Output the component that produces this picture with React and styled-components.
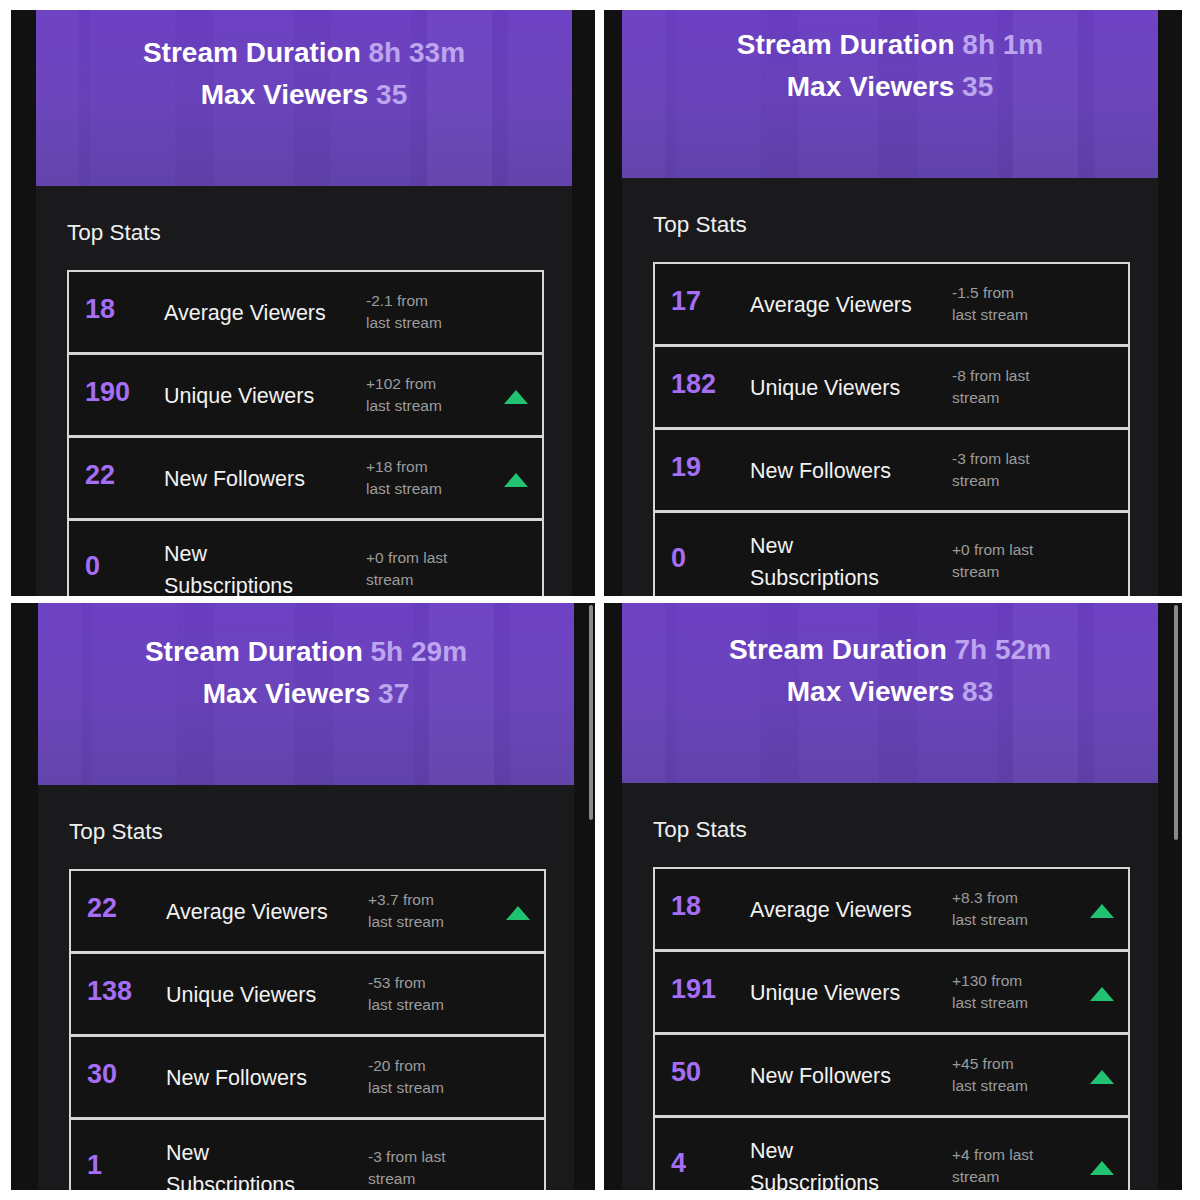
import React from 'react';
import styled, { createGlobalStyle } from 'styled-components';

const GlobalStyle = createGlobalStyle`
  body {
    margin: 0;
    background: #ffffff;
    font-family: "Liberation Sans", Arial, sans-serif;
  }
`;

const Collage = styled.div`
  display: grid;
  grid-template-columns: 584px 578px;
  grid-template-rows: 586px 587px;
  column-gap: 9px;
  row-gap: 7px;
  padding: 10px 0 0 11px;
`;

const Phone = styled.div`
  position: relative;
  overflow: hidden;
  background: #111112;
  padding-left: ${(props) => props.inset}px;
`;

const Column = styled.div`
  width: 536px;
  height: 100%;
  background: #1a1a1c;
`;

// faint vertical light streaks over the purple header
const Banner = styled.div`
  padding: ${(props) => props.top}px 0 70px;
  text-align: center;
  color: #ffffff;
  font-size: 28px;
  font-weight: 700;
  line-height: 42px;
  background:
    linear-gradient(
      90deg,
      rgba(255, 255, 255, 0.025) 0%,
      rgba(255, 255, 255, 0.025) 8%,
      rgba(0, 0, 0, 0.02) 8%,
      rgba(0, 0, 0, 0.02) 10%,
      rgba(255, 255, 255, 0.01) 10%,
      rgba(255, 255, 255, 0.01) 26%,
      rgba(0, 0, 0, 0.015) 26%,
      rgba(0, 0, 0, 0.015) 33%,
      rgba(255, 255, 255, 0.015) 33%,
      rgba(255, 255, 255, 0.015) 48%,
      rgba(0, 0, 0, 0.02) 48%,
      rgba(0, 0, 0, 0.02) 55%,
      rgba(255, 255, 255, 0.01) 55%,
      rgba(255, 255, 255, 0.01) 70%,
      rgba(0, 0, 0, 0.025) 70%,
      rgba(0, 0, 0, 0.025) 73%,
      rgba(255, 255, 255, 0.035) 73%,
      rgba(255, 255, 255, 0.035) 85%,
      rgba(0, 0, 0, 0.025) 85%,
      rgba(0, 0, 0, 0.025) 88%,
      rgba(255, 255, 255, 0.02) 88%
    ),
    linear-gradient(180deg, #6b3ec3 0%, #6942bb 50%, #5f40a9 100%);
`;

const BannerValue = styled.span`
  color: #bca5ee;
`;

const Body = styled.div`
  padding: 34px 0 0 31px;
`;

const SectionTitle = styled.div`
  color: #efefef;
  font-size: 22.5px;
  line-height: 26px;
  margin-bottom: 24px;
`;

const Table = styled.div`
  width: 477px;
  box-sizing: border-box;
  border: 2px solid #d6d6d6;
  border-bottom: none;
  background: #131314;
`;

const Row = styled.div`
  display: flex;
  align-items: center;
  padding: 15px 14px 15px 16px;
  border-top: ${(props) => (props.first ? 'none' : '3px solid #d6d6d6')};
`;

const Count = styled.div`
  width: 79px;
  flex-shrink: 0;
  margin-bottom: 5px;
  color: #a56ef5;
  font-size: 27px;
  font-weight: 700;
  line-height: 1;
`;

const Label = styled.div`
  width: 172px;
  margin-right: 30px;
  padding-top: 2px;
  flex-shrink: 0;
  color: #f2f2f2;
  font-size: 21.5px;
  line-height: 32px;
`;

const Delta = styled.div`
  width: 84px;
  min-height: 50px;
  display: flex;
  align-items: center;
  color: #9c9c9c;
  font-size: 15.5px;
  line-height: 22px;
`;

const Arrow = styled.svg`
  margin-left: auto;
  margin-top: 4px;
  display: block;
`;

const ScrollBar = styled.div`
  position: absolute;
  top: 2px;
  right: ${(props) => props.right}px;
  width: 4px;
  height: ${(props) => props.length}px;
  border-radius: 2px;
  background: #8a8a8a;
`;

const panels = [
  {
    inset: 25,
    top: 22,
    duration: '8h 33m',
    max: 35,
    rows: [
      [18, 'Average Viewers', '-2.1 from last stream', false],
      [190, 'Unique Viewers', '+102 from last stream', true],
      [22, 'New Followers', '+18 from last stream', true],
      [0, 'New Subscriptions', '+0 from last stream', false],
    ],
  },
  {
    inset: 18,
    top: 14,
    duration: '8h 1m',
    max: 35,
    rows: [
      [17, 'Average Viewers', '-1.5 from last stream', false],
      [182, 'Unique Viewers', '-8 from last stream', false],
      [19, 'New Followers', '-3 from last stream', false],
      [0, 'New Subscriptions', '+0 from last stream', false],
    ],
  },
  {
    inset: 27,
    top: 28,
    duration: '5h 29m',
    max: 37,
    scroll: { right: 2, length: 215 },
    rows: [
      [22, 'Average Viewers', '+3.7 from last stream', true],
      [138, 'Unique Viewers', '-53 from last stream', false],
      [30, 'New Followers', '-20 from last stream', false],
      [1, 'New Subscriptions', '-3 from last stream', false],
    ],
  },
  {
    inset: 18,
    top: 26,
    duration: '7h 52m',
    max: 83,
    scroll: { right: 4, length: 235 },
    rows: [
      [18, 'Average Viewers', '+8.3 from last stream', true],
      [191, 'Unique Viewers', '+130 from last stream', true],
      [50, 'New Followers', '+45 from last stream', true],
      [4, 'New Subscriptions', '+4 from last stream', true],
    ],
  },
];

const UpArrow = () => (
  <Arrow width="24" height="14" viewBox="0 0 24 14">
    <polygon points="12,0 24,14 0,14" fill="#21c271" />
  </Arrow>
);

const StatsPanel = ({ panel }) => (
  <Phone inset={panel.inset}>
    <Column>
      <Banner top={panel.top}>
        <div>
          Stream Duration <BannerValue>{panel.duration}</BannerValue>
        </div>
        <div>
          Max Viewers <BannerValue>{panel.max}</BannerValue>
        </div>
      </Banner>
      <Body>
        <SectionTitle>Top Stats</SectionTitle>
        <Table>
          {panel.rows.map(([count, label, delta, up], i) => (
            <Row key={label} first={i === 0}>
              <Count>{count}</Count>
              <Label>{label}</Label>
              <Delta>{delta}</Delta>
              {up && <UpArrow />}
            </Row>
          ))}
        </Table>
      </Body>
    </Column>
    {panel.scroll && <ScrollBar right={panel.scroll.right} length={panel.scroll.length} />}
  </Phone>
);

const App = () => (
  <>
    <GlobalStyle />
    <Collage>
      {panels.map((panel) => (
        <StatsPanel key={panel.duration} panel={panel} />
      ))}
    </Collage>
  </>
);

export default App;
